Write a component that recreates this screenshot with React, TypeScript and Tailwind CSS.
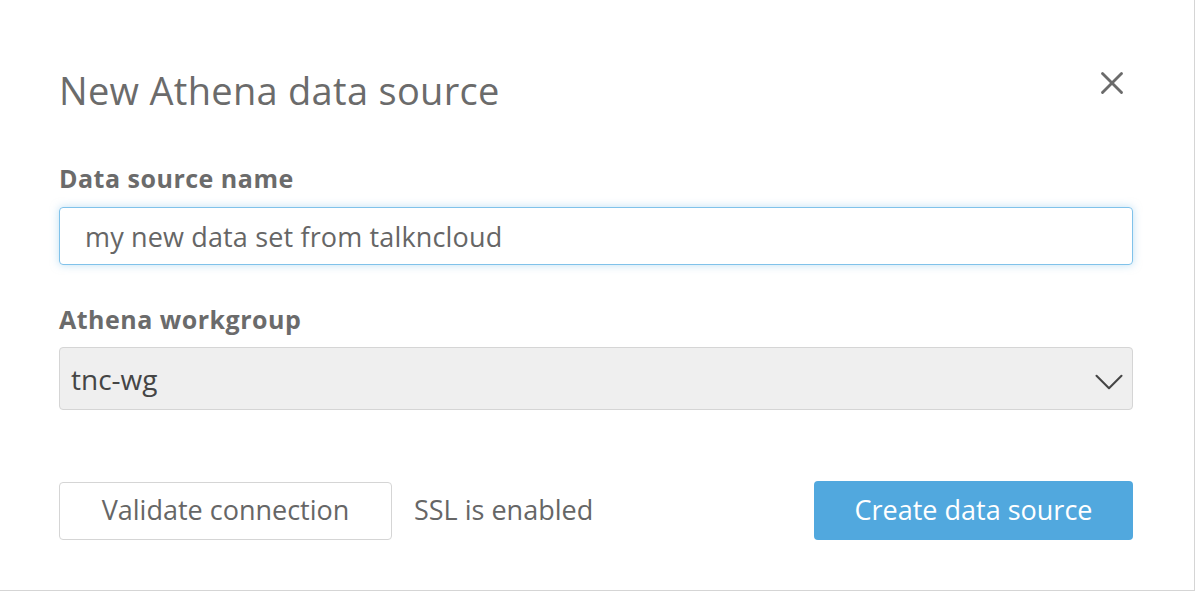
import { X, ChevronDown } from "lucide-react";

export default function App() {
  return (
    <div
      className="h-[592px] w-[1196px] bg-white"
      style={{ fontFamily: '"Open Sans", "Noto Sans", sans-serif' }}
    >
      <div className="flex h-[591px] w-[1195px] flex-col border-r border-b border-[#d5d5d5] pr-[61px] pl-[59px]">
        <div className="flex items-start justify-between pt-[65px]">
          <h2 className="text-[38px] leading-[50px] tracking-[0.3px] text-[#6b6b6b]">
            New Athena data source
          </h2>
          <button className="mt-[-1px] mr-[2px] text-[#6b6b6b]">
            <X size={38} strokeWidth={1.8} />
          </button>
        </div>

        <label className="mt-[48px] text-[25px] leading-[30px] font-bold tracking-[0.5px] text-[#6b6b6b]">
          Data source name
        </label>
        <input
          defaultValue="my new data set from talkncloud"
          className="mt-[14px] h-[58px] w-full rounded-[4px] border border-[#80c2ea] px-[25px] text-[27px] tracking-[0.15px] text-[#666] shadow-[0_0_8px_rgba(128,194,234,0.5)] outline-none"
        />

        <label className="mt-[39px] text-[25px] leading-[30px] font-bold tracking-[0.5px] text-[#6b6b6b]">
          Athena workgroup
        </label>
        <div className="mt-[13px] flex h-[63px] w-full items-center justify-between rounded-[4px] border border-[#d5d5d5] bg-[#efefef] pl-[11px]">
          <span className="text-[28px] text-[#454545]">tnc-wg</span>
          <ChevronDown size={50} strokeWidth={1} className="mt-[6px] mr-[-2px] text-[#454545]" />
        </div>

        <div className="mt-[71px] flex items-center">
          <button className="h-[58px] w-[333px] rounded-[4px] border border-[#d5d5d5] bg-white text-[27px] text-[#666]">
            Validate connection
          </button>
          <span className="ml-[22px] text-[27px] text-[#666]">SSL is enabled</span>
          <button className="ml-auto h-[59px] w-[319px] rounded-[4px] bg-[#51a8de] text-[27px] text-white">
            Create data source
          </button>
        </div>
      </div>
    </div>
  );
}
